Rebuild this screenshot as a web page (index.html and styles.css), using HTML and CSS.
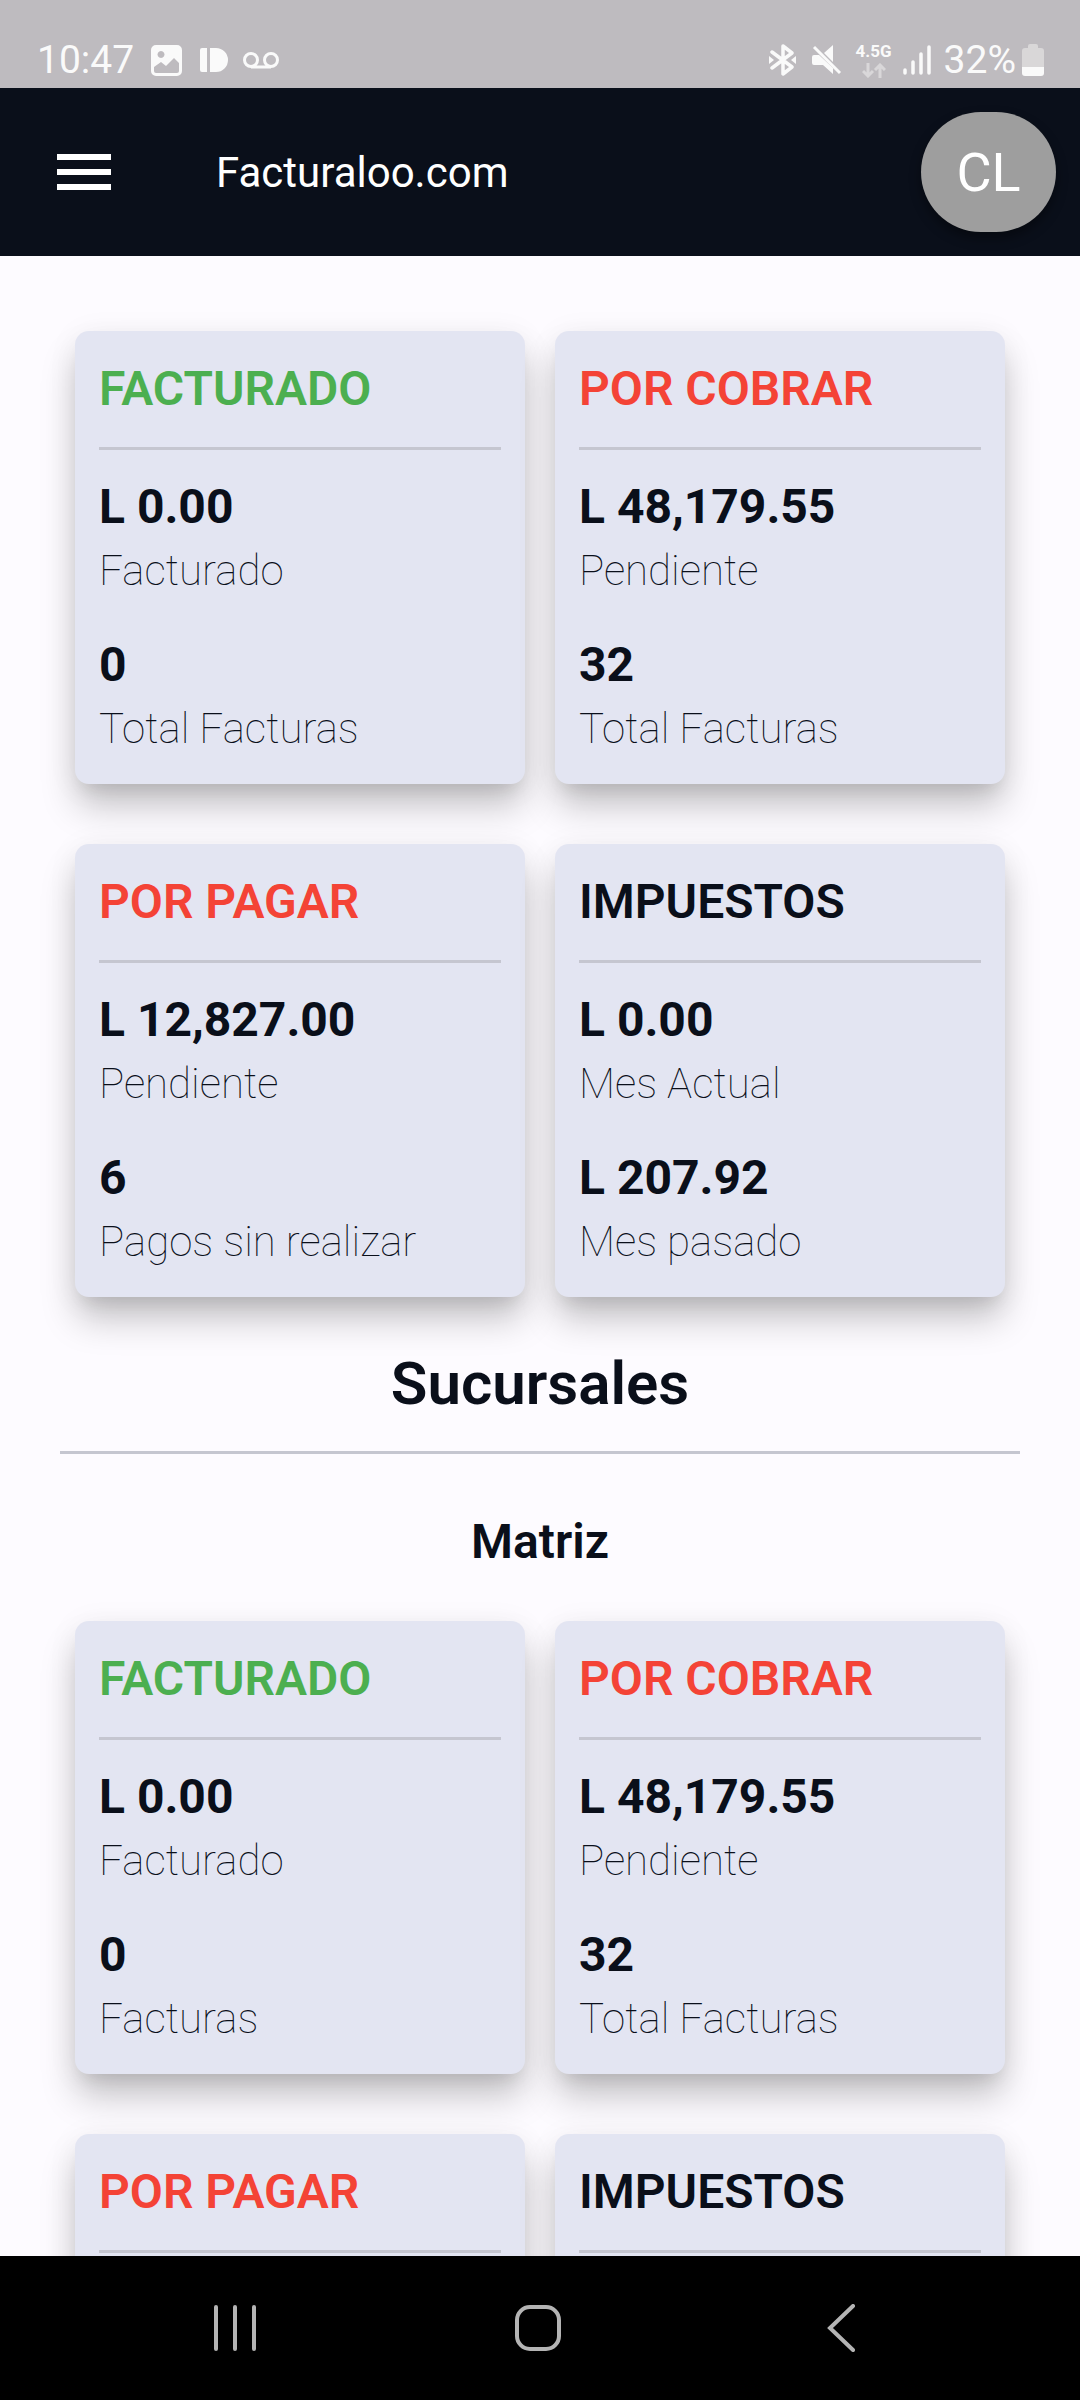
FILE: index.html
```html
<!DOCTYPE html>
<html lang="es">
<head>
<meta charset="utf-8">
<meta name="viewport" content="width=device-width, initial-scale=1">
<title>Facturaloo.com</title>
<link rel="stylesheet" href="styles.css">
</head>
<body>
<div class="status-bar">
  <div class="status-left">
    <span class="clock">10:47</span>
    <svg class="icon-image" width="31" height="31" viewBox="0 0 31 31"><path fill="#fafafa" fill-rule="evenodd" d="M5 0h21a5 5 0 0 1 5 5v21a5 5 0 0 1-5 5H5a5 5 0 0 1-5-5V5a5 5 0 0 1 5-5zM10 6a3.500 3.500 0 1 0 .01 0zM3 22v4q0 2 2 2h21q2 0 2-2v-8l-5-5-8 8-5-4z"/></svg>
    <svg class="icon-tile" width="28" height="24" viewBox="0 0 28 24"><path fill="#fafafa" d="M2 0h5v24H2q-2 0-2-2V2q0-2 2-2zM10 0h6a12 12 0 0 1 0 24h-6z"/></svg>
    <svg class="icon-voicemail" width="36" height="17" viewBox="0 0 36 17" fill="none" stroke="#fafafa" stroke-width="3"><circle cx="8" cy="8" r="6.500"/><circle cx="28" cy="8" r="6.500"/><path d="M8 15h20"/></svg>
  </div>
  <div class="status-right">
    <svg class="icon-bluetooth" width="27" height="32" viewBox="0 0 27 32" fill="none" stroke="#fafafa" stroke-width="3.500" stroke-linejoin="round" stroke-linecap="round"><path d="M3 8l20 15-9 7V2l9 7L3 24"/><path fill="#fafafa" stroke="none" d="M0 12l5 4-5 4zM27 12l-5 4 5 4z"/></svg>
    <svg class="icon-mute" width="30" height="30" viewBox="0 0 30 30"><path fill="#fafafa" d="M21 0v17L12 8zM2 10h5L21 23v6L11 20H2q-2 0-2-2v-6q0-2 2-2z"/><path stroke="#fafafa" stroke-width="3" d="M2 2l26 26"/></svg>
    <div class="network">
      <span class="network-type">4.5G</span>
      <svg width="24" height="15" viewBox="0 0 24 15" fill="none" stroke="#d9d7d9" stroke-width="3"><path d="M6 0v13M1 8l5 5 5-5M18 15V2M13 7l5-5 5 5"/></svg>
    </div>
    <svg class="icon-signal" width="28" height="30" viewBox="0 0 28 30" stroke="#fafafa" stroke-width="3.500" stroke-linecap="round"><path d="M2 25v3M10 17v11M18 9v19M26 2v26"/></svg>
    <span class="battery-level">32%</span>
    <svg class="icon-battery" width="22" height="32" viewBox="0 0 22 32"><path fill="#d9d7d8" d="M6 2q0-2 2-2h6q2 0 2 2v2h3q3 0 3 3v16H0V7q0-3 3-3h3z"/><path fill="#fafafa" d="M0 23h22v6q0 3-3 3H3q-3 0-3-3z"/></svg>
  </div>
</div>

<header class="app-bar">
  <button class="menu-button" type="button" aria-label="Menú"><svg width="54" height="36" viewBox="0 0 54 36"><path fill="#fff" d="M0 0h54v6H0zM0 15h54v6H0zM0 30h54v6H0z"/></svg></button>
  <h1 class="app-title">Facturaloo.com</h1>
  <button class="avatar" type="button">CL</button>
</header>

<main class="content">
  <section class="cards">
    <article class="card">
      <h2 class="card-title green">FACTURADO</h2>
      <dl class="figures">
        <div class="figure"><dt>Facturado</dt><dd>L 0.00</dd></div>
        <div class="figure"><dt>Total Facturas</dt><dd>0</dd></div>
      </dl>
    </article>
    <article class="card">
      <h2 class="card-title red">POR COBRAR</h2>
      <dl class="figures">
        <div class="figure"><dt>Pendiente</dt><dd>L 48,179.55</dd></div>
        <div class="figure"><dt>Total Facturas</dt><dd>32</dd></div>
      </dl>
    </article>
    <article class="card">
      <h2 class="card-title red">POR PAGAR</h2>
      <dl class="figures">
        <div class="figure"><dt>Pendiente</dt><dd>L 12,827.00</dd></div>
        <div class="figure"><dt>Pagos sin realizar</dt><dd>6</dd></div>
      </dl>
    </article>
    <article class="card">
      <h2 class="card-title">IMPUESTOS</h2>
      <dl class="figures">
        <div class="figure"><dt>Mes Actual</dt><dd>L 0.00</dd></div>
        <div class="figure"><dt>Mes pasado</dt><dd>L 207.92</dd></div>
      </dl>
    </article>
  </section>

  <h2 class="section-title">Sucursales</h2>
  <h3 class="branch-title">Matriz</h3>

  <section class="cards">
    <article class="card">
      <h2 class="card-title green">FACTURADO</h2>
      <dl class="figures">
        <div class="figure"><dt>Facturado</dt><dd>L 0.00</dd></div>
        <div class="figure"><dt>Facturas</dt><dd>0</dd></div>
      </dl>
    </article>
    <article class="card">
      <h2 class="card-title red">POR COBRAR</h2>
      <dl class="figures">
        <div class="figure"><dt>Pendiente</dt><dd>L 48,179.55</dd></div>
        <div class="figure"><dt>Total Facturas</dt><dd>32</dd></div>
      </dl>
    </article>
    <article class="card">
      <h2 class="card-title red">POR PAGAR</h2>
    </article>
    <article class="card">
      <h2 class="card-title">IMPUESTOS</h2>
    </article>
  </section>
</main>

<nav class="system-nav">
  <button type="button" aria-label="Recientes"><svg width="48" height="48" viewBox="0 0 48 48" stroke="#b4b4b4" stroke-width="4" stroke-linecap="round"><path d="M5 3v42M24 3v42M43 3v42"/></svg></button>
  <button type="button" aria-label="Inicio"><svg width="48" height="48" viewBox="0 0 48 48" fill="none" stroke="#b4b4b4" stroke-width="4"><rect x="3" y="3" width="42" height="42" rx="13"/></svg></button>
  <button type="button" aria-label="Atrás"><svg width="48" height="48" viewBox="0 0 48 48" fill="none" stroke="#b4b4b4" stroke-width="4" stroke-linecap="round"><path d="M36 2L13 24l23 22"/></svg></button>
</nav>
</body>
</html>
```
FILE: styles.css
```css
* {
  box-sizing: border-box;
  margin: 0;
  padding: 0;
}

body {
  display: flex;
  flex-direction: column;
  height: 100vh;
  background: #fdfbff;
  color: #0a0f1a;
  font-family: Roboto, "Liberation Sans", sans-serif;
}

button {
  border: 0;
  background: none;
  color: inherit;
  font: inherit;
}

svg {
  display: block;
}

.status-bar {
  display: flex;
  flex: none;
  justify-content: space-between;
  height: 88px;
  padding: 32px 36px 0 37px;
  background: #bebbbf;
  color: #fafafa;
  font-size: 39px;
}

.status-left,
.status-right {
  display: flex;
  align-items: center;
  height: 56px;
}

.icon-image {
  margin-left: 17px;
}

.icon-tile {
  margin-left: 18px;
}

.icon-voicemail {
  margin-left: 15px;
}

.icon-mute {
  margin-left: 16px;
}

.network {
  display: flex;
  flex-direction: column;
  align-items: center;
  gap: 3px;
  margin-left: 14px;
}

.network-type {
  font-size: 17px;
  font-weight: 700;
  line-height: 18px;
}

.icon-signal {
  margin-left: 11px;
}

.battery-level {
  margin-left: 13px;
}

.icon-battery {
  margin-left: 6px;
}

.app-bar {
  display: flex;
  flex: none;
  align-items: center;
  height: 168px;
  padding: 0 24px 0 57px;
  background: #0a0f1a;
  color: #fff;
}

.app-title {
  flex: 1;
  margin-left: 105px;
  font-size: 42px;
  font-weight: 400;
}

.avatar {
  width: 135px;
  height: 120px;
  border-radius: 60px;
  background: #9e9e9e;
  box-shadow: 0 6px 12px rgba(0, 0, 0, 0.4);
  font-size: 54px;
}

.content {
  flex: 1;
  min-height: 0;
  overflow: hidden;
  padding: 75px 60px 0;
}

.cards {
  display: grid;
  grid-template-columns: 1fr 1fr;
  gap: 60px 30px;
  padding: 0 15px;
}

.card {
  padding: 24px;
  border-radius: 14px;
  background: #e3e5f2;
  box-shadow:
    0 12px 16px -8px rgba(0, 0, 0, 0.08),
    0 24px 36px -2px rgba(0, 0, 0, 0.22),
    0 4px 32px rgba(0, 0, 0, 0.06);
}

.card-title {
  padding-bottom: 24px;
  border-bottom: 3px solid #c5c6d0;
  font-size: 48px;
  font-weight: 600;
  line-height: 68px;
}

.green {
  color: #4caf50;
}

.red {
  color: #f44336;
}

.figures {
  display: flex;
  flex-direction: column;
  gap: 29px;
  padding-top: 23px;
}

.figure {
  display: flex;
  flex-direction: column-reverse;
}

.figure dd {
  font-size: 48px;
  font-weight: 700;
  line-height: 67px;
}

.figure dt {
  font-size: 42px;
  font-weight: 100;
  line-height: 62px;
}

.section-title {
  margin-top: 47px;
  padding-bottom: 27px;
  border-bottom: 3px solid #c5c6d0;
  font-size: 60px;
  font-weight: 600;
  line-height: 80px;
  text-align: center;
}

.branch-title {
  margin: 54px 0 45px;
  font-size: 48px;
  font-weight: 600;
  line-height: 68px;
  text-align: center;
}

.system-nav {
  display: grid;
  flex: none;
  grid-template-columns: repeat(3, 1fr);
  height: 144px;
  padding: 0 88px 0 84px;
  background: #000;
}

.system-nav button {
  display: flex;
  align-items: center;
  justify-content: center;
}
```
